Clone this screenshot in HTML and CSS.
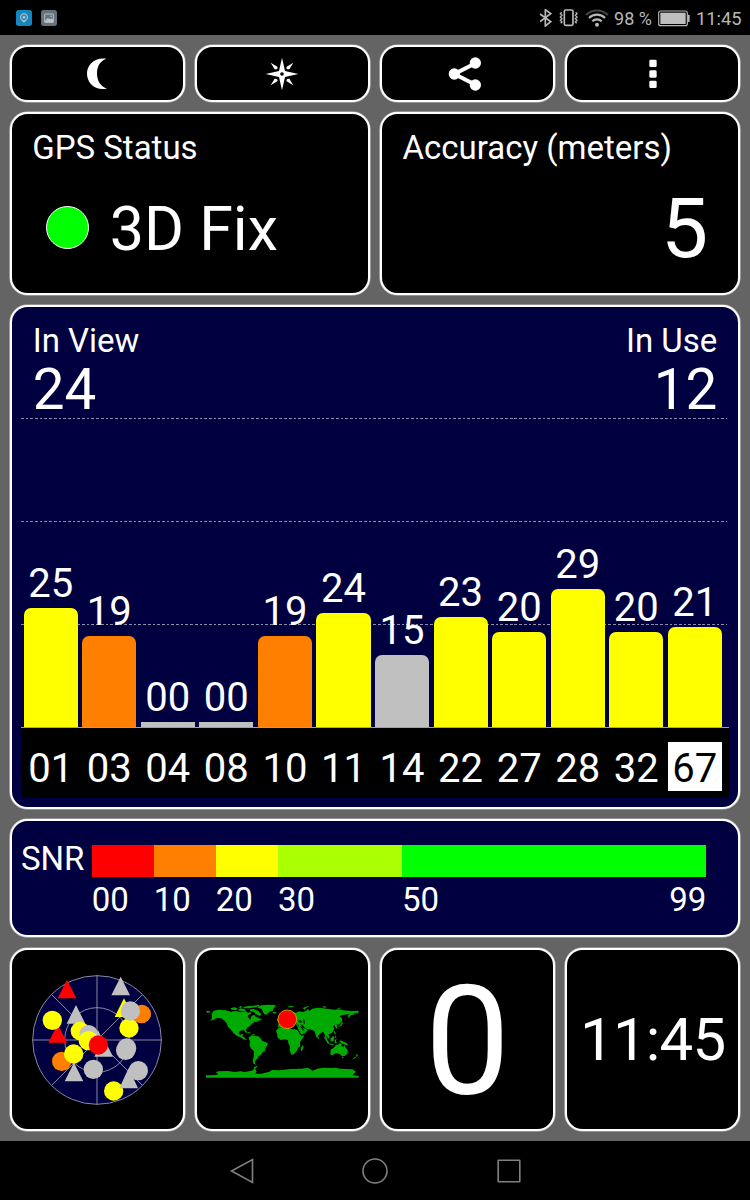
FILE: index.html
```html
<!DOCTYPE html>
<html lang="en">
<head>
    <meta charset="UTF-8">
    <meta name="viewport" content="width=device-width, initial-scale=1.0">
    <title>GPS Status</title>
    <link rel="stylesheet" href="styles.css">
</head>
<body>

<!-- Status bar -->
<header class="status-bar">
    <div class="notifications">
        <svg width="16" height="16" viewBox="0 0 48 48">
            <rect width="48" height="48" rx="8" fill="#1585bf"/>
            <path d="M24 10c-7 0-12 5-12 12 0 8 8 11 12 17 4-6 12-9 12-17 0-7-5-12-12-12z" fill="#b5bfc4"/>
            <circle cx="24" cy="22" r="6.5" fill="#b5bfc4" stroke="#1585bf" stroke-width="4"/>
        </svg>
        <svg width="16" height="16" viewBox="0 0 48 48">
            <rect width="48" height="48" rx="8" fill="#65727c"/>
            <rect x="11" y="12" width="26" height="25" rx="1" fill="none" stroke="#b9bfc3" stroke-width="3"/>
            <path d="M12 32l8-8 8 4 4-3 5 5v7H12z" fill="#b9bfc3"/>
            <circle cx="30" cy="19" r="2.5" fill="#b9bfc3"/>
        </svg>
    </div>
    <div class="system">
        <svg class="bluetooth" width="13" height="18" viewBox="0 0 39 54">
            <path d="M3 15l32 23-16 13V2l16 12L3 38" fill="none" stroke="#b8b8b8" stroke-width="5"/>
        </svg>
        <svg class="vibrate" width="19" height="18" viewBox="0 0 57 54">
            <rect x="16" y="3" width="26" height="46" rx="4" fill="none" stroke="#b8b8b8" stroke-width="5"/>
            <path d="M8 10l-4 4 5 5-5 5 5 5-5 5 5 5-4 4M50 10l4 4-5 5 5 5-5 5 5 5-5 5 4 4" fill="none" stroke="#b8b8b8" stroke-width="4"/>
        </svg>
        <svg class="wifi" width="24" height="18" viewBox="0 0 72 54">
            <path d="M3 18a47 47 0 0 1 66 0" fill="none" stroke="#444" stroke-width="6"/>
            <path d="M12 27a34 34 0 0 1 48 0M22 37a20 20 0 0 1 28 0" fill="none" stroke="#b8b8b8" stroke-width="6.5"/>
            <circle cx="36" cy="47" r="6" fill="#b8b8b8"/>
        </svg>
        <span class="battery-level">98 %</span>
        <svg class="battery" width="32" height="17" viewBox="0 0 96 51">
            <rect x="2" y="3" width="86" height="44" rx="6" fill="none" stroke="#b4b4b4" stroke-width="3.5"/>
            <rect x="7" y="8" width="76" height="34" fill="#bebebe"/>
            <path d="M89 14h4q2 0 2 2v18q0 2-2 2h-4z" fill="#b4b4b4"/>
        </svg>
        <span class="clock">11:45</span>
    </div>
</header>

<main class="dashboard">

    <!-- Toolbar -->
    <section class="row">
        <button class="panel tool">
            <svg width="20" height="33" viewBox="0 0 60 99">
                <path d="M58 2C20-2 0 22 0 47s21 52 60 45C42 87 30 70 30 46S40 10 58 2z" fill="#fff"/>
            </svg>
        </button>
        <button class="panel tool">
            <svg width="34" height="34" viewBox="-51 -51 102 102">
                <path d="M0-49L9-9 49 0 9 9 0 49-9 9-49 0-9-9z" fill="#fff"/>
                <path d="M-34-34l20 12q3 9-8 8zM34-34L14-22q-3 9 8 8zM-34 34l20-12q3-9-8-8zM34 34L14 22q-3-9 8-8z" fill="#fff"/>
                <circle r="5.5" fill="#000"/>
            </svg>
        </button>
        <button class="panel tool share">
            <svg width="34" height="34" viewBox="0 0 102 102">
                <path d="M84 18L19 51l65 33" fill="none" stroke="#fff" stroke-width="12"/>
                <circle cx="19" cy="51" r="17" fill="#fff"/>
                <circle cx="82" cy="18" r="17" fill="#fff"/>
                <circle cx="82" cy="84" r="17" fill="#fff"/>
            </svg>
        </button>
        <button class="panel tool">
            <svg width="8" height="30" viewBox="0 0 24 90">
                <g fill="#fff">
                    <rect x="1" y="2" width="22" height="22" rx="4"/>
                    <rect x="1" y="34" width="22" height="22" rx="4"/>
                    <rect x="1" y="65" width="22" height="22" rx="4"/>
                </g>
            </svg>
        </button>
    </section>

    <!-- Fix and accuracy -->
    <section class="row halves">
        <div class="panel info">
            <h2>GPS Status</h2>
            <div class="fix">
                <span class="fix-dot"></span>
                <span class="fix-text">3D Fix</span>
            </div>
        </div>
        <div class="panel info">
            <h2>Accuracy (meters)</h2>
            <div class="accuracy">5</div>
        </div>
    </section>

    <!-- Satellites -->
    <section class="panel satellites">
        <div class="counts">
            <div class="count">
                <h2>In View</h2>
                <p>24</p>
            </div>
            <div class="count right">
                <h2>In Use</h2>
                <p>12</p>
            </div>
        </div>
        <div class="plot">
            <div class="grid-lines"><i></i><i></i><i></i></div>
            <div class="bars" id="bars"></div>
        </div>
        <div class="ids" id="ids"></div>
    </section>

    <!-- SNR legend -->
    <section class="panel legend">
        <span class="legend-title">SNR</span>
        <div class="scale">
            <div class="step s10"><div class="swatch red"></div><span>00</span></div>
            <div class="step s10"><div class="swatch orange"></div><span>10</span></div>
            <div class="step s10"><div class="swatch yellow"></div><span>20</span></div>
            <div class="step s20"><div class="swatch lime"></div><span>30</span></div>
            <div class="step s49"><div class="swatch green"></div><span>50</span><span>99</span></div>
        </div>
    </section>

    <!-- Tiles -->
    <section class="row">
        <div class="panel tile graphic">
            <svg width="134" height="134" viewBox="61 68 402 402">
                <circle cx="262" cy="269" r="193" fill="#000040"/>
                <g fill="none" stroke="#a4a4b8" stroke-width="2.5">
                    <circle cx="262" cy="269" r="193"/>
                    <circle cx="262" cy="269" r="97"/>
                    <path d="M262 76v386M69 269h386M126 133l272 272M398 133L126 405"/>
                </g>
                <g fill="#c0c0c0">
                    <path d="M333 79l28 56h-56zM199 164l28 56h-56zM193 337l28 56h-56z"/>
                    <path d="M265 240l28 56h-56zM282 263l28 56h-56z"/>
                </g>
                <path d="M172 88l28 56h-56zM144 221l28 56h-56z" fill="#f00"/>
                <path d="M343 144l28 56h-56z" fill="#ff0"/>
                <g fill="#ff8000">
                    <circle cx="396" cy="191" r="28"/>
                    <circle cx="156" cy="333" r="29"/>
                </g>
                <g fill="#ff0">
                    <circle cx="128" cy="210" r="29"/>
                    <circle cx="358" cy="233" r="29"/>
                    <circle cx="211" cy="242" r="28"/>
                    <circle cx="192" cy="311" r="29"/>
                    <circle cx="312" cy="422" r="29"/>
                </g>
                <g fill="#c0c0c0">
                    <circle cx="362" cy="182" r="29"/>
                    <circle cx="237" cy="252" r="28"/>
                    <circle cx="351" cy="293" r="29"/>
                    <circle cx="348" cy="300" r="29"/>
                    <circle cx="251" cy="357" r="29"/>
                    <circle cx="386" cy="361" r="29"/>
                </g>
                <path d="M357 353l28 61h-56z" fill="#c0c0c0"/>
                <circle cx="236" cy="271" r="29" fill="#ff0"/>
                <circle cx="266" cy="284" r="29" fill="#f00"/>
            </svg>
        </div>
        <div class="panel tile graphic">
            <svg width="154.6" height="76" viewBox="30 50 464 228">
                <g fill="#00aa00">
                    <path d="M33 76l10 1 3 4-9 2zM50 85l6-9 16-3 20 2 14 4 18-2 14 4 14-3 8 5 6-4 3 6-9 4-2 6 8 8 4-12 8-2 6 7 5 0 6 8-7 5-9 0-9 7-6 6-8 6-3 6 3 7-3 2-6-8-11 1-5 6 4 8 6-4 4 1-3 7 7 1 1 6 6 2-2 2-9-3-8-6-11-4-10-8-9-12-8-7-3-10-7-9-11-7-12-1-14 7-6 2 5-8z"/>
                    <path d="M106 69l12-3 10 3-4 5-14-1zM127 74l10-5 12 3 5 5-14 1zM145 65l16-3 12 0 16-4 6 3-15 5-18 3-14 0zM164 72l12-1 14 6 9 9-4 6-12-5-6-7-11-3zM130 66l8-4 4 2-5 4z"/>
                    <path d="M188 64l12-4 20-2 20 1 2 5-6 4-1 7-12 5-9 8-6-1-5-8-2-8-11-3z"/>
                    <path d="M233 81l7-2 5 2-5 4-6-1z"/>
                    <path d="M154 139l8 1 8 4-5 0-10-3zM172 145l8 1-2 2-6 0zM190 101l7-2 3 4-6 1z"/>
                    <path d="M161 157l10-8 10 3 9 1 8 7 4 7 9 3 8 4-3 8-4 5-2 10-7 3-5 8-7 5-5 9-5 4-1 8 4 4-8-2-3-8 3-12 1-18-8-8-5-9 1-12z"/>
                    <path d="M243 136l8-9 16-3 14 1 3 6 16 1 9 3 6 12 4 4 9-2-4 9-9 12 1 12-7 7-4 8-8 10-8 1-5-14 1-10-5-11-1-8-8-3-14 2-9-7-1-9z"/>
                    <path d="M324 179l2 6-5 12-4-1 1-9z"/>
                    <path d="M250 117l8-2 4 7-6 4-7-2zM250 97l-5 6 2 5 4-1zM277 65l8-3 12 1-3 3-14 0z"/>
                    <path d="M303 117l14 0 6 10 11 4 4 4-8 9-11 4-6-10z"/>
                    <path d="M290 79l14 3 8-4 12 2 10-4 5-5 4 6 9-7 18-3 15 2 9 1 8 1 15 2 14-1 13 3 24 2 23-1-1 8-13 0 1 4-10 1-7 10-2-9 5-5-14 3-12 1-4 5 8 4-2 11-9 9-6-1 3 11-5 2-4-10-5 2 4 8-5 11-7 4-6 2 5 8-4 5-6-8 1 13 6 9-4 0-6-12-1-11-6-12-8 4-6 7-3 8-4-3-5-17-9-5-13-1-7-5-4-3-2-6-8 0-10-1-8-15z"/>
                    <path d="M323 68l8-3 9-3 3 1-11 6-2 5zM382 64l9-1 5 3-10 1zM427 68l10-1 1 2-9 1zM369 155l3 0 1 5-3 0z"/>
                    <path d="M438 99l3 8-2 2zM440 109l4 3-3 8-9 5-2-2 7-5zM417 136l4 4 1 8-4-2zM420 150l5 6-5 2z"/>
                    <path d="M385 152l6 3 10 14 2 7-5-2zM402 174l14 3-1 3-13-3zM406 161l8-9 5 3-4 13-7 1zM419 163l7-2-3 5 3 7-4-1-2 4zM434 165l10 3 12 6 4 6-8-1-10-4-8-5zM419 179l10 1-2 2z"/>
                    <path d="M407 193l9-6 8-9 6 0 3-4 7 1 0 6 6 4 1-8 4 8 7 9 0 9-8 9-9 1-6-7-11-3-11 6-7-1zM440 215l7 0-3 4z"/>
                    <path d="M483 206l7 4-5 6zM481 214l3 2-8 6-3-1z"/>
                    <path d="M33 277v-7l34-1 1-6-7-2 10-3 28-1 20 3 18-2 12 2 21-4 8-6-2-4 11-5-1 4-5 6 4 8-4 6 18 0 24-6 8-5 24 1 32-4 32-1 20-3 14 9 14-6 18-3 24 1 14-1 12 3L473 252l10 7-10 11 18 1v6z"/>
                </g>
                <path d="M308 107l8-2 6 4-6 3zM325 101l3 0 2 14-4-1zM302 121l10 0-3 3zM305 123l12 23-2 1-12-22zM318 122l10 13-2 1-10-12z" fill="#000"/>
                <circle cx="277" cy="102" r="28" fill="#f00" stroke="#c8b400" stroke-width="2.5"/>
            </svg>
        </div>
        <div class="panel tile speed">0</div>
        <div class="panel tile time">11:45</div>
    </section>
</main>

<!-- Navigation bar -->
<nav class="nav-bar">
    <svg width="28" height="28" viewBox="0 0 28 28"><path d="M24.5 2.5v23L3.5 14z"/></svg>
    <svg width="28" height="28" viewBox="0 0 28 28"><circle cx="14" cy="14" r="12"/></svg>
    <svg width="28" height="28" viewBox="0 0 28 28"><rect x="3.2" y="3.2" width="21.6" height="21.6" rx=".5"/></svg>
</nav>

<script>
    const PX_PER_DB = 4.75;

    const satellites = [
        { id: "01", snr: 25, color: "yellow" },
        { id: "03", snr: 19, color: "orange" },
        { id: "04", snr: 0, color: "gray" },
        { id: "08", snr: 0, color: "gray" },
        { id: "10", snr: 19, color: "orange" },
        { id: "11", snr: 24, color: "yellow" },
        { id: "14", snr: 15, color: "gray" },
        { id: "22", snr: 23, color: "yellow" },
        { id: "27", snr: 20, color: "yellow" },
        { id: "28", snr: 29, color: "yellow" },
        { id: "32", snr: 20, color: "yellow" },
        { id: "67", snr: 21, color: "yellow", glonass: true }
    ];

    const bars = document.getElementById("bars");
    const ids = document.getElementById("ids");

    satellites.forEach(sat => {
        // empty satellites still get a thin flat bar
        const height = Math.max(sat.snr * PX_PER_DB, 4.5);
        bars.innerHTML += `
            <div class="bar-col">
                <span>${String(sat.snr).padStart(2, "0")}</span>
                <div class="bar ${sat.color} ${sat.snr ? "" : "empty"}" style="height: ${height}px"></div>
            </div>
        `;
        ids.innerHTML += `<span class="${sat.glonass ? "glonass" : ""}">${sat.id}</span>`;
    });
</script>

</body>
</html>
```
FILE: styles.css
```css
/* Basic Reset */
* {
    margin: 0;
    padding: 0;
    box-sizing: border-box;
}

body {
    font-family: Roboto, "Liberation Sans", sans-serif;
    background-color: #646464;
    color: #fff;
    height: 1200px;
    display: flex;
    flex-direction: column;
    overflow: hidden;
}

h2 {
    font-size: 33px;
    line-height: 33px;
    font-weight: 400;
}

svg {
    display: block;
    flex: none;
}

/* Status bar */
.status-bar {
    height: 35px;
    flex: none;
    background-color: #000;
    display: flex;
    justify-content: space-between;
    padding: 0 8.5px 0 16px;
    color: #b8b8b8;
    line-height: 35px;
}

.notifications,
.system {
    display: flex;
    align-items: center;
}

.notifications {
    gap: 9px;
}

.vibrate {
    margin-left: 7px;
}

.wifi {
    margin: 0 5px 0 7px;
}

.battery-level {
    font-size: 18px;
    padding-top: 2px;
}

.battery {
    margin: 1px 6px 0 6px;
}

.clock {
    font-size: 18.3px;
    padding-top: 2px;
}

/* Dashboard layout */
.dashboard {
    flex: 1;
    display: grid;
    grid-template-rows: 57.4px 182.6px 503.6px 118.6px 183px;
    gap: 10.2px;
    padding: 9.7px;
}

.row {
    display: grid;
    grid-template-columns: repeat(4, 1fr);
    gap: 10px;
}

.halves {
    grid-template-columns: repeat(2, 1fr);
}

.panel {
    background-color: #000;
    border: 2.5px solid #fff;
    border-radius: 17.5px;
    color: #fff;
    box-shadow: 0 0 0 .6px rgba(255, 255, 255, .6);
}

.tool {
    display: flex;
    justify-content: center;
    align-items: center;
    padding-top: 1.5px;
}

.share {
    padding-right: 5px;
}

/* Fix and accuracy */
.info {
    padding: 17px 20.5px;
}

.fix {
    display: flex;
    align-items: center;
    margin: 35px 0 0 14px;
    gap: 20.5px;
}

.fix-dot {
    width: 43px;
    height: 43px;
    margin-top: -5px;
    border: 1px solid #fff;
    border-radius: 50%;
    background-color: #00ff00;
}

.fix-text {
    font-size: 61px;
    line-height: 61px;
}

.accuracy {
    font-size: 84px;
    line-height: 84px;
    margin-top: 22.5px;
    padding-right: 9.5px;
    text-align: right;
}

/* Satellites */
.satellites,
.legend {
    background-color: #000040;
}

.counts {
    display: flex;
    justify-content: space-between;
    height: 110.6px;
    padding: 17px 21px 0;
}

.count p {
    font-size: 56.6px;
    line-height: 57px;
    margin-top: 4px;
}

.right {
    text-align: right;
}

.plot {
    position: relative;
    height: 310px;
    margin: 0 9.3px;
    border-bottom: 1px solid #a0a0a0;
}

.grid-lines {
    position: absolute;
    inset: 0 2px 0 0;
}

.grid-lines i {
    display: block;
    height: 1px;
    margin-bottom: 102px;
    background: repeating-linear-gradient(90deg, #8c8ca8 0 2.7px, transparent 2.7px 4.7px);
}

.bars {
    position: relative;
    display: flex;
    align-items: flex-end;
    gap: 4.4px;
    height: 100%;
    padding: 0 7px 0 2.6px;
}

.bar-col {
    flex: 1;
    text-align: center;
    font-size: 40px;
    line-height: 40px;
}

.bar-col span {
    display: block;
    margin-bottom: 4px;
}

.bar {
    border-radius: 7px 7px 0 0;
}

.empty {
    border-radius: 0;
}

.red { background-color: #ff0000; }
.orange { background-color: #ff8000; }
.yellow { background-color: #ffff00; }
.lime { background-color: #aaff00; }
.green { background-color: #00ff00; }
.gray { background-color: #c0c0c0; }

.ids {
    display: flex;
    align-items: center;
    gap: 4.4px;
    height: 70px;
    margin: 0 9.3px;
    padding: 7px 7px 0 2.6px;
    background-color: #000;
}

.ids span {
    flex: 1;
    height: 49px;
    text-align: center;
    font-size: 40px;
    line-height: 53px;
}

.ids .glonass {
    background-color: #fff;
    color: #000;
}

/* SNR legend */
.legend {
    display: flex;
    padding: 24.5px 32px 0 9.3px;
}

.legend-title {
    width: 70.7px;
    font-size: 33px;
    line-height: 33px;
    margin-top: -3px;
}

.scale {
    flex: 1;
    display: flex;
}

.step {
    display: flex;
    flex-wrap: wrap;
    align-content: flex-start;
    justify-content: space-between;
    row-gap: 6px;
    font-size: 33px;
    line-height: 33px;
}

.swatch {
    width: 100%;
    height: 32px;
}

.s10 { flex: 10 0 0; }
.s20 { flex: 20 0 0; }
.s49 { flex: 49 0 0; }

/* Tiles */
.tile {
    display: flex;
    justify-content: center;
    align-items: center;
    line-height: 1;
}

.graphic {
    padding-top: 1.5px;
}

.speed {
    font-size: 152px;
    padding-top: 5px;
}

.time {
    font-size: 60px;
    letter-spacing: -.8px;
    padding-top: 2px;
}

/* Navigation bar */
.nav-bar {
    height: 59px;
    flex: none;
    display: flex;
    justify-content: center;
    align-items: center;
    gap: 105.5px;
    background-color: #000;
}

.nav-bar svg {
    fill: none;
    stroke: #808080;
    stroke-width: 1.6;
}
```
